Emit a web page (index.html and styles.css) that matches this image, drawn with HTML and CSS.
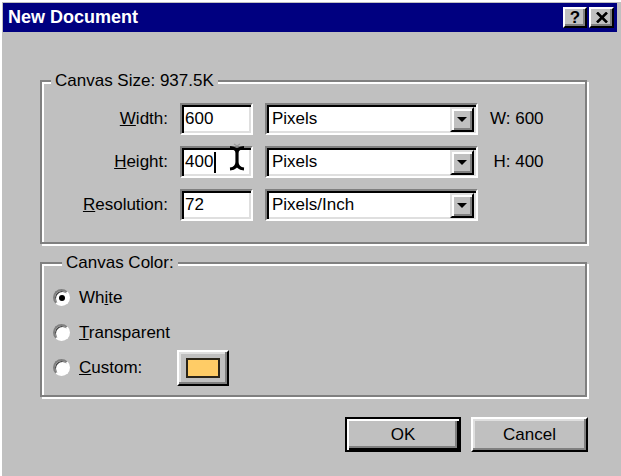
FILE: index.html
```html
<!DOCTYPE html>
<html>
<head>
<meta charset="utf-8">
<link rel="stylesheet" href="styles.css">
</head>
<body>
<div class="window">
  <div class="titlebar">
    <span class="title">New Document</span>
    <div class="tbtns">
      <span class="tbtn help">?</span>
      <span class="tbtn close"><svg width="12" height="11" viewBox="0 0 12 11"><path d="M1 0.5 L11 10.5 M11 0.5 L1 10.5" stroke="#000" stroke-width="2.6" fill="none"/></svg></span>
    </div>
  </div>
  <div class="content">
    <fieldset class="group size">
      <legend>Canvas Size: 937.5K</legend>
      <div class="grid">
        <span class="lbl"><u>W</u>idth:</span>
        <div class="field">600</div>
        <div class="select"><span class="sel-text">Pixels</span><span class="arrow-btn"><span class="arrow"></span></span></div>
        <span class="dim">W: 600</span>

        <span class="lbl"><u>H</u>eight:</span>
        <div class="field">400<span class="caret"></span>
          <svg class="ibeam" width="18" height="28" viewBox="0 0 18 28"><path d="M6 1 L9 3 L12 1" stroke="#9a9a9a" stroke-width="1.2" fill="none"/><path d="M2 4.5 Q9 5 9 10 Q9 5 16 4.5 M9 9 V20 M2 26 Q9 25.5 9 19 Q9 25.5 16 26" stroke="#000" stroke-width="3.2" fill="none"/></svg>
        </div>
        <div class="select"><span class="sel-text">Pixels</span><span class="arrow-btn"><span class="arrow"></span></span></div>
        <span class="dim">H: 400</span>

        <span class="lbl"><u>R</u>esolution:</span>
        <div class="field">72</div>
        <div class="select"><span class="sel-text">Pixels/Inch</span><span class="arrow-btn"><span class="arrow"></span></span></div>
        <span class="dim"></span>
      </div>
    </fieldset>

    <fieldset class="group color">
      <legend>Canvas Color:</legend>
      <div class="radios">
        <div class="rrow"><span class="radio"><span class="dot"></span></span><span class="rlabel">Wh<u>i</u>te</span></div>
        <div class="rrow"><span class="radio"></span><span class="rlabel"><u>T</u>ransparent</span></div>
        <div class="rrow"><span class="radio"></span><span class="rlabel custom"><u>C</u>ustom:</span><span class="swatch-btn"><span class="swatch"></span></span></div>
      </div>
    </fieldset>

    <div class="actions">
      <span class="btn default">OK</span>
      <span class="btn">Cancel</span>
    </div>
  </div>
</div>
</body>
</html>
```

FILE: styles.css
```css
* { box-sizing: border-box; }
body {
  margin: 0;
  background: #c0c0c0;
  font-family: "Liberation Sans", Arial, sans-serif;
  font-size: 17px;
  color: #000;
}
.window {
  width: 621px;
  height: 476px;
  border-top: 2px solid #fff;
  border-left: 2px solid #fff;
  padding: 1px 4px 0 1px;
  background: #c0c0c0;
  overflow: hidden;
}
.titlebar {
  height: 29px;
  background: #000080;
  display: flex;
  align-items: center;
  justify-content: space-between;
  padding: 0 3px 0 5px;
}
.title {
  color: #fff;
  font-weight: bold;
  font-size: 18px;
}
.tbtns { display: flex; gap: 2px; }
.tbtn {
  width: 24px;
  height: 21px;
  display: flex;
  align-items: center;
  justify-content: center;
  background: #c0c0c0;
  border: 2px solid;
  border-color: #fff #000 #000 #fff;
  box-shadow: inset -2px -2px 0 #808080;
  font-weight: bold;
  font-size: 17px;
  line-height: 1;
}
.tbtn.close { width: 25px; }

.content { padding: 40px 30px 0 37px; }

.group {
  margin: 0;
  min-width: 0;
  border: 2px solid #808080;
  box-shadow: inset 2px 2px 0 #fff, 2px 2px 0 #fff;
}
.group legend {
  margin-left: 9px;
  padding: 0 4px;
  line-height: 18px;
  background: #c0c0c0;
}
.size { padding: 13px 0 21px 0; }
.grid {
  display: grid;
  grid-template-columns: 126px 73px 213px 1fr;
  grid-auto-rows: 32px;
  column-gap: 12px;
  row-gap: 11px;
}
.lbl { text-align: right; align-self: center; }
.field, .select {
  background: #fff;
  border: 2px solid;
  border-color: #808080 #fff #fff #808080;
  box-shadow: inset 2px 2px 0 #000, inset -2px -2px 0 #dfdfdf;
  display: flex;
  align-items: center;
}
.field { padding-left: 3px; position: relative; }
.caret {
  display: inline-block;
  width: 2px;
  height: 21px;
  background: #000;
  margin-left: 1px;
}
.ibeam { position: absolute; left: 46px; top: -5px; }
.select { padding: 2px 2px 2px 5px; }
.sel-text { flex: 1; }
.arrow-btn {
  width: 24px;
  height: 25px;
  background: #c0c0c0;
  border: 2px solid;
  border-color: #dfdfdf #000 #000 #dfdfdf;
  box-shadow: inset 2px 2px 0 #fff, inset -2px -2px 0 #808080;
  display: flex;
  align-items: center;
  justify-content: center;
}
.arrow {
  width: 0;
  height: 0;
  border-left: 5px solid transparent;
  border-right: 5px solid transparent;
  border-top: 5px solid #000;
}
.dim {
  align-self: center;
  text-align: right;
  padding-right: 43px;
  white-space: nowrap;
}

.color { margin-top: 10px; padding: 8px 0 10px 11px; }
.radios { display: grid; grid-auto-rows: 35px; }
.rrow { display: flex; align-items: center; }
.radio {
  width: 17px;
  height: 17px;
  border-radius: 50%;
  background: #fff;
  border: 2px solid;
  border-color: #808080 #fff #fff #808080;
  box-shadow: inset 1px 1px 0 #404040;
  display: flex;
  align-items: center;
  justify-content: center;
}
.dot { width: 6px; height: 6px; border-radius: 50%; background: #000; }
.rlabel { margin-left: 9px; }
.rlabel.custom { width: 98px; }
.swatch-btn {
  width: 52px;
  height: 36px;
  background: #c0c0c0;
  border: 2px solid;
  border-color: #fff #000 #000 #fff;
  box-shadow: inset -2px -2px 0 #808080, inset 2px 2px 0 #dfdfdf;
  display: flex;
  align-items: center;
  justify-content: center;
}
.swatch {
  width: 34px;
  height: 20px;
  background: #ffcc66;
  border: 2px solid #2a2418;
}

.actions {
  display: flex;
  justify-content: flex-end;
  gap: 10px;
  margin-top: 20px;
  margin-right: -1px;
}
.btn {
  width: 117px;
  height: 35px;
  display: flex;
  align-items: center;
  justify-content: center;
  border: 2px solid;
  border-color: #fff #000 #000 #fff;
  box-shadow: inset -2px -2px 0 #808080, inset 2px 2px 0 #dfdfdf;
}
.btn.default {
  width: 116px;
  border-color: #000;
  box-shadow: inset 2px 2px 0 #fff, inset -2px -2px 0 #000, inset -4px -4px 0 #808080;
}
```
